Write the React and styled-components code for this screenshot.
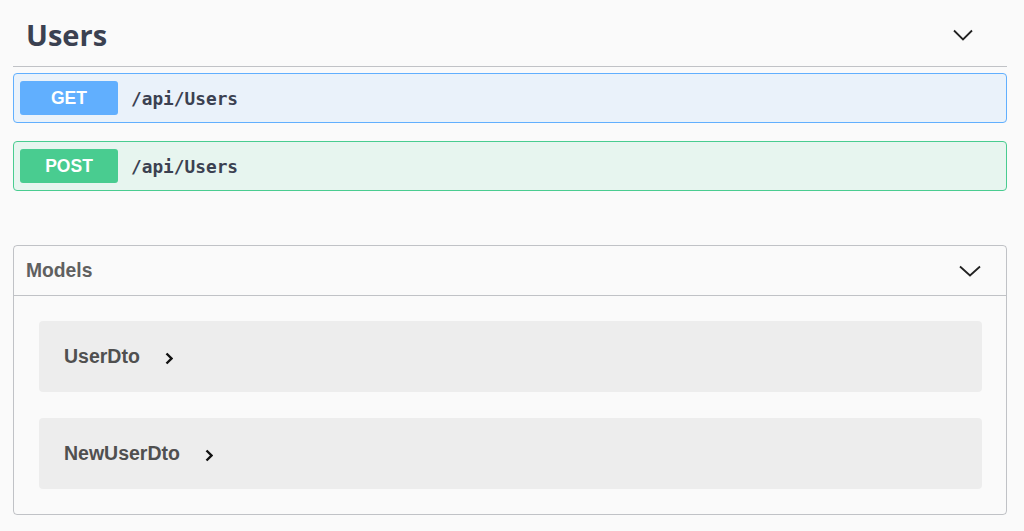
import React from "react";
import styled, { createGlobalStyle } from "styled-components";

const GlobalStyle = createGlobalStyle`
  body {
    margin: 0;
    background: #fafafa;
    font-family: "Liberation Sans", Arial, sans-serif;
  }
`;

const methodColors = {
  GET: { main: "#61affe", soft: "rgba(97, 175, 254, 0.1)" },
  POST: { main: "#49cc90", soft: "rgba(73, 204, 144, 0.1)" },
};

const Page = styled.div`
  padding: 0 17px 16px 13px;
`;

const TagHeader = styled.div`
  display: flex;
  align-items: center;
  justify-content: space-between;
  height: 67px;
  padding: 3px 34px 0 13px;
  box-sizing: border-box;
  border-bottom: 1px solid rgba(59, 65, 81, 0.3);
`;

const TagTitle = styled.h3`
  margin: 0;
  font-family: "Open Sans", sans-serif;
  font-size: 29px;
  font-weight: 700;
  color: #3b4151;
`;

const OpBlock = styled.div`
  display: flex;
  align-items: center;
  margin-top: 6px;
  margin-bottom: ${(p) => p.$gap || 0}px;
  padding: 7px 6px;
  border: 1px solid ${(p) => methodColors[p.$method].main};
  border-radius: 4px;
  background: ${(p) => methodColors[p.$method].soft};
`;

const MethodBadge = styled.span`
  display: flex;
  align-items: center;
  justify-content: center;
  width: 98px;
  height: 34px;
  border-radius: 3px;
  background: ${(p) => methodColors[p.$method].main};
  color: #fff;
  font-size: 17.5px;
  font-weight: 700;
`;

const OpPath = styled.span`
  margin-left: 13px;
  font-family: "DejaVu Sans Mono", monospace;
  font-size: 17.8px;
  font-weight: 700;
  color: #3b4151;
`;

const Models = styled.section`
  margin-top: 54px;
  border: 1px solid rgba(59, 65, 81, 0.3);
  border-radius: 4px;
`;

const ModelsHeader = styled.div`
  display: flex;
  align-items: center;
  justify-content: space-between;
  height: 49px;
  padding: 0 25px 0 12px;
  border-bottom: 1px solid rgba(59, 65, 81, 0.3);
`;

const ModelsTitle = styled.h4`
  margin: 0;
  font-size: 19.3px;
  font-weight: 700;
  color: #606060;
`;

const ModelsBody = styled.div`
  display: flex;
  flex-direction: column;
  gap: 26px;
  padding: 25px 24px 25px 25px;
`;

const ModelItem = styled.div`
  display: flex;
  align-items: center;
  gap: 25px;
  height: 71px;
  padding-left: 25px;
  border-radius: 4px;
  background: rgba(0, 0, 0, 0.05);
`;

const ModelName = styled.span`
  font-size: 19.5px;
  font-weight: 700;
  color: #505050;
`;

const ChevronDown = ({ w = 20, h = 12 }) => (
  <svg width={w} height={h} viewBox={`0 0 ${w} 12`}>
    <path d={`M1 1.5 L${w / 2} 10.5 L${w - 1} 1.5`} fill="none" stroke="#222" strokeWidth="1.8" />
  </svg>
);

const ChevronRight = () => (
  <svg width="8" height="13" viewBox="0 0 8 13" style={{ marginTop: 3 }}>
    <path d="M1.5 1.5 L6.5 6.5 L1.5 11.5" fill="none" stroke="#111" strokeWidth="2.4" />
  </svg>
);

const operations = [
  { method: "GET", path: "/api/Users" },
  { method: "POST", path: "/api/Users" },
];

const models = ["UserDto", "NewUserDto"];

export default function App() {
  return (
    <Page>
      <GlobalStyle />
      <TagHeader>
        <TagTitle>Users</TagTitle>
        <ChevronDown />
      </TagHeader>
      {operations.map((op, i) => (
        <OpBlock key={op.method} $method={op.method} $gap={i === 0 ? 18 : 0}>
          <MethodBadge $method={op.method}>{op.method}</MethodBadge>
          <OpPath>{op.path}</OpPath>
        </OpBlock>
      ))}
      <Models>
        <ModelsHeader>
          <ModelsTitle>Models</ModelsTitle>
          <ChevronDown w={22} h={12} />
        </ModelsHeader>
        <ModelsBody>
          {models.map((m) => (
            <ModelItem key={m}>
              <ModelName>{m}</ModelName>
              <ChevronRight />
            </ModelItem>
          ))}
        </ModelsBody>
      </Models>
    </Page>
  );
}
